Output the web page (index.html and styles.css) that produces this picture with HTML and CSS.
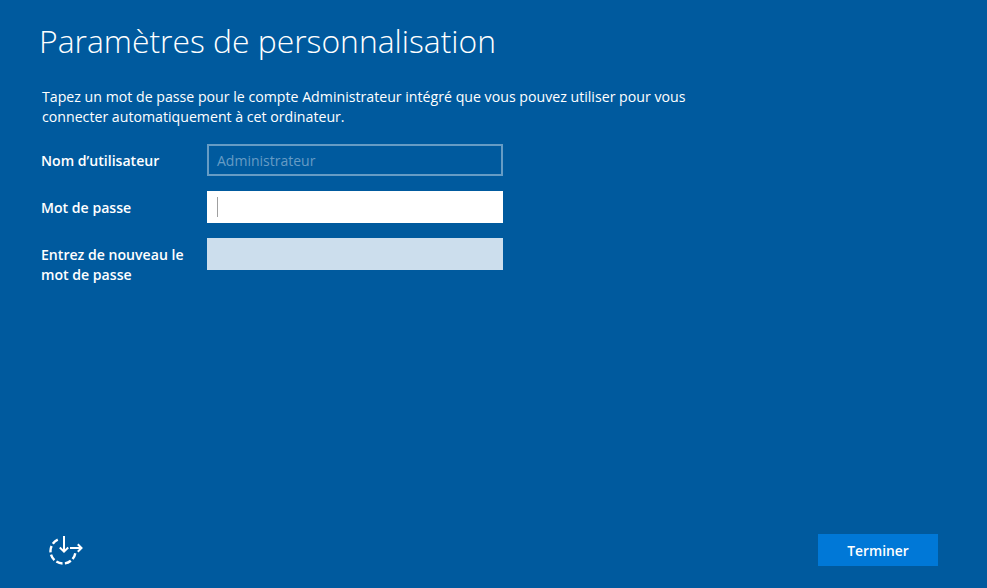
FILE: index.html
```html
<!DOCTYPE html>
<html lang="fr">
	<head>
		<meta charset="utf-8">
		<title>Paramètres de personnalisation</title>
		<link rel="stylesheet" href="styles.css">
	</head>
	<body>
		<main class="content">
			<h1 class="title">Paramètres de personnalisation</h1>
			<p class="intro">Tapez un mot de passe pour le compte Administrateur intégré que vous pouvez utiliser pour vous connecter automatiquement à cet ordinateur.</p>
			<div class="form">
				<div class="row">
					<label class="label">Nom d’utilisateur</label>
					<div class="field field-disabled">Administrateur</div>
				</div>
				<div class="row">
					<label class="label">Mot de passe</label>
					<div class="field field-active"><span class="caret"></span></div>
				</div>
				<div class="row">
					<label class="label">Entrez de nouveau le mot de passe</label>
					<div class="field field-empty"></div>
				</div>
			</div>
		</main>
		<footer class="footer">
			<svg class="access-icon" width="34" height="32" viewBox="0 0 34 32" fill="none" stroke="#fff" stroke-width="2.400">
				<path d="M26.300 19.200A12.500 12.500 0 1 1 10 5.160" stroke-dasharray="6.500 2.400"/>
				<path d="M15 2v16M10.800 13.500l4.200 4.200 4.200-4.200" stroke-width="2"/>
				<path d="M21 14h11M28.800 10.300 32.500 14 28.800 17.700" stroke-width="2"/>
			</svg>
			<button class="finish" type="button">Terminer</button>
		</footer>
	</body>
</html>
```

FILE: styles.css
```css
html, body {
	height: 100%;
}
body {
	margin: 0;
	box-sizing: border-box;
	display: flex;
	flex-direction: column;
	justify-content: space-between;
	background-color: #005a9e;
	color: #fff;
	font-family: "Open Sans", "Noto Sans", "Liberation Sans", sans-serif;
	overflow: hidden;
}
.content {
	padding: 18px 0 0 39px;
}
.title {
	margin: 0;
	font-size: 31.850px;
	font-weight: 300;
	line-height: 46px;
}
.intro {
	width: 665px;
	margin: 23px 0 0 3px;
	font-size: 14.170px;
	line-height: 20px;
}
.form {
	margin-top: 17px;
	display: flex;
	flex-direction: column;
	gap: 15px;
}
.row {
	display: flex;
	align-items: flex-start;
	margin-left: 2px;
}
.label {
	width: 166px;
	padding: 7px 10px 0 0;
	box-sizing: border-box;
	font-size: 14.100px;
	font-weight: 600;
	line-height: 20px;
}
.field {
	width: 296px;
	height: 32px;
	box-sizing: border-box;
	font-size: 14px;
	line-height: 29px;
}
.field-disabled {
	border: 2px solid #669cc5;
	padding-left: 8px;
	color: #669cc5;
}
.field-active {
	background-color: #fff;
	padding: 6px 0 0 10px;
}
.caret {
	display: block;
	width: 1px;
	height: 20px;
	background-color: #a0a0a0;
}
.field-empty {
	background-color: #ccdeed;
}
.footer {
	display: flex;
	justify-content: space-between;
	align-items: center;
	padding: 0 49px 22px 49px;
}
.access-icon {
	display: block;
}
.finish {
	width: 120px;
	height: 32px;
	border: 0;
	padding: 0;
	background-color: #0078d7;
	color: #fff;
	font-family: inherit;
	font-size: 13.800px;
	font-weight: 600;
}
```
